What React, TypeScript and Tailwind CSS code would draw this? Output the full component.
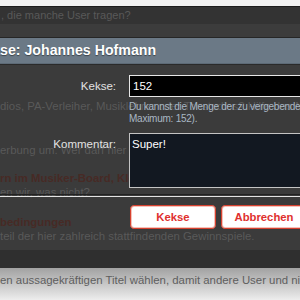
export default function App() {
  return (
    <div className="relative w-[300px] h-[300px] overflow-hidden bg-[#3b3b3b] font-['Liberation_Sans',Arial,sans-serif]">
      {/* page behind the overlay */}
      <div className="flex flex-col h-full">
        <div className="h-[6px] bg-[#f2f2f2]" />
        <div className="h-[1px] bg-[#1c1c1c]" />
        <div className="h-[17px] bg-[#333333] text-[11px] leading-[17px] text-[#595959] pl-[1px] whitespace-nowrap">
          , die manche User tragen?
        </div>
        <div className="h-[13px] bg-[#3c3c3c]" />
        <div className="h-[213px] bg-[#3b3b3b] flex flex-col whitespace-nowrap text-[#595959] text-[11.4px]">
          <div className="mt-[62px] leading-[14px]">dios, PA-Verleiher, Musiklehrer oder Tonstudios? Hilfe das Musiker-Board</div>
          <div className="mt-[30px] leading-[14px]">erbung um. Wer darf hier werben?</div>
          <div className="mt-[14px] leading-[14px] font-bold text-[#472a25]">rn im Musiker-Board, Kleinanzeigen</div>
          <div className="leading-[14px]">en wir, was nicht?</div>
          <div className="mt-[16px] leading-[14px] font-bold text-[#472a25]">bedingungen</div>
          <div className="leading-[14px]">teil der hier zahlreich stattfindenden Gewinnspiele.</div>
        </div>
        <div className="h-[18px] bg-[#2f2f2f]" />
        <div className="flex-1 bg-gradient-to-b from-[#a2a2a2] to-[#ededed] pt-[5px] text-[11.4px] leading-[14px] text-[#5e5e5e] whitespace-nowrap">
          en aussagekräftigen Titel wählen, damit andere User und nicht
        </div>
      </div>

      {/* overlay dialog */}
      <div className="absolute left-0 top-[37px] w-[430px] flex flex-col">
        <div className="h-[1px] bg-[#262626]" />
        <div className="h-[26px] bg-[#6b7986] border-b border-[#5d6a76] overflow-hidden">
          <div className="ml-[-26px] text-[14.2px] leading-[25px] font-bold text-white whitespace-nowrap [text-shadow:0_1px_1px_rgba(0,0,0,0.45)]">
            Kekse: Johannes Hofmann
          </div>
        </div>
        <div className="h-[1px] bg-[#2a2a2a]" />

        <div className="pt-[10px] flex flex-col">
          <div className="grid grid-cols-[116px_1fr] gap-x-[13px]">
            <div className="text-right text-[11.5px] leading-[22px] text-[#e2e2e2]">Kekse:</div>
            <div className="flex flex-col">
              <div className="h-[22px] w-[290px] bg-black border border-[#e6e6e6] text-[11.5px] leading-[20px] text-white pl-[3px]">152</div>
              <div className="mt-[4px] text-[10px] leading-[12px] tracking-[-0.25px] text-[#a9b7c4] whitespace-nowrap">
                <div>Du kannst die Menge der zu vergebenden Kekse angeben (Minimum: 1,</div>
                <div>Maximum: 152).</div>
              </div>
            </div>
            <div className="mt-[8px] text-right text-[11.5px] leading-[22px] text-[#e2e2e2]">Kommentar:</div>
            <div className="mt-[8px] h-[55px] w-[290px] bg-[#121821] border border-[#c4c4c4] text-[11.5px] leading-[16px] text-white pl-[2px] pt-[2px]">Super!</div>
          </div>
          <div className="mt-[6px] h-[1px] bg-[#222222]" />
          <div className="mt-[1px] h-[1px] bg-[#e4e4e4]" />
          <div className="mt-[8px] flex gap-[5px] pl-[130px]">
            <div className="w-[86px] h-[24px] bg-white border border-[#d7412f] rounded-[4px] shadow-[inset_0_0_0_1px_#f4c2ba] flex items-center justify-center text-[11.3px] font-bold text-[#e0302e]">Kekse</div>
            <div className="w-[86px] h-[24px] bg-white border border-[#d7412f] rounded-[4px] shadow-[inset_0_0_0_1px_#f4c2ba] flex items-center justify-center text-[11.3px] font-bold text-[#e0302e]">Abbrechen</div>
          </div>
        </div>
      </div>
    </div>
  );
}
